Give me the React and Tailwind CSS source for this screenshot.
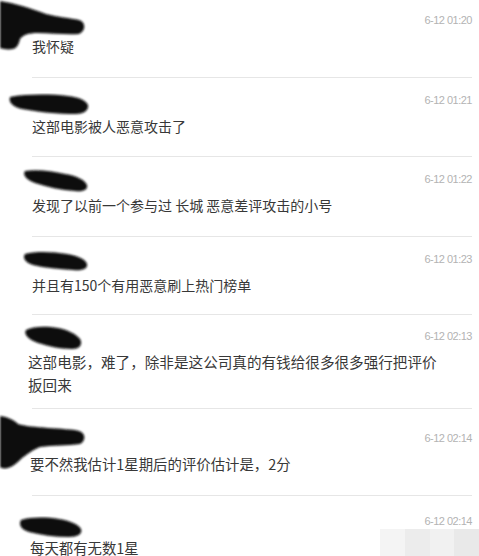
import React from "react";

const font = { fontFamily: '"Noto Sans CJK SC", "Noto Sans", sans-serif' };

function Blob({ className, d, w, h }) {
  return (
    <svg className={className} width={w} height={h} viewBox={`0 0 ${w} ${h}`}>
      <defs>
        <filter id="bl" x="-20%" y="-20%" width="140%" height="140%">
          <feGaussianBlur stdDeviation="0.9" />
        </filter>
      </defs>
      <path d={d} fill="#0b0b0b" filter="url(#bl)" />
    </svg>
  );
}

function Item({ time, children, pt, textMt, divMt, textCls, divider = true }) {
  return (
    <div className={pt}>
      <div className="text-right text-[11px] leading-[14px] tracking-[-0.5px] text-[#b3b3b3] [font-family:'Liberation_Sans',Arial,sans-serif]">
        {time}
      </div>
      <div className={`${textMt} ${textCls}`}>{children}</div>
      {divider && <div className={`${divMt} border-t border-[#e6e6e6]`} />}
    </div>
  );
}

export default function App() {
  const base = "text-[14px] leading-[20px] text-[#383838]";
  return (
    <div
      className="relative w-[479px] h-[556px] overflow-hidden bg-white pl-[32px] pr-[7px]"
      style={font}
    >
      <Item time="6-12 01:20" pt="pt-[13px]" textMt="mt-[9px]" divMt="mt-[21px]" textCls={base}>
        我怀疑
      </Item>
      <Item time="6-12 01:21" pt="pt-[15px]" textMt="mt-[9px]" divMt="mt-[20px]" textCls={base}>
        这部电影被人恶意攻击了
      </Item>
      <Item time="6-12 01:22" pt="pt-[15px]" textMt="mt-[9px]" divMt="mt-[21px]" textCls={base}>
        发现了以前一个参与过 长城 恶意差评攻击的小号
      </Item>
      <Item time="6-12 01:23" pt="pt-[15px]" textMt="mt-[9px]" divMt="mt-[19px]" textCls={base}>
        并且有150个有用恶意刷上热门榜单
      </Item>
      <Item
        time="6-12 02:13"
        pt="pt-[14px]"
        textMt="mt-[7px]"
        divMt="mt-[12px]"
        textCls="-ml-[4px] text-[14.6px] leading-[23px] text-[#383838]"
      >
        这部电影，难了，除非是这公司真的有钱给很多很多强行把评价
        <br />
        扳回来
      </Item>
      <Item
        time="6-12 02:14"
        pt="pt-[22px]"
        textMt="mt-[9px]"
        divMt="mt-[21px]"
        textCls="-ml-[2px] text-[14.4px] leading-[20px] text-[#383838]"
      >
        要不然我估计1星期后的评价估计是，2分
      </Item>
      <Item
        time="6-12 02:14"
        pt="pt-[18px]"
        textMt="mt-[10px]"
        textCls="-ml-[2px] text-[14.4px] leading-[20px] text-[#383838]"
        divider={false}
      >
        每天都有无数1星
      </Item>

      {/* watermark blocks */}
      <div className="absolute left-[380px] top-[529px] w-[99px] h-[27px] grid grid-cols-4">
        <div className="bg-[#f4f4f4]" />
        <div className="bg-[#ececec]" />
        <div className="bg-[#f1f1f1]" />
        <div className="bg-[#e9e9e9]" />
      </div>

      {/* redaction scribbles */}
      <Blob
        className="absolute left-0 top-0"
        w={88}
        h={52}
        d="M0,1 C14,3 30,8 46,14 C58,17 70,18 79,20 C86,22 86,31 79,34 C66,35 52,33 38,33 C28,33 23,35 20,39 C19,44 17,48 13,49 C8,50 3,49 0,48 Z"
      />
      <Blob
        className="absolute left-[6px] top-[93px]"
        w={86}
        h={24}
        d="M4,4 C20,1 44,1 62,3 C72,4 80,7 82,12 C83,17 78,21 70,21 C52,21 32,19 16,16 C8,14 2,10 4,4 Z"
      />
      <Blob
        className="absolute left-[21px] top-[167px]"
        w={70}
        h={28}
        d="M4,4 C16,2 30,4 44,7 C56,9 64,13 66,18 C67,23 62,25 54,24 C40,23 26,20 14,16 C6,13 1,8 4,4 Z"
      />
      <Blob
        className="absolute left-[21px] top-[250px]"
        w={70}
        h={24}
        d="M4,4 C16,1 32,2 46,4 C58,6 65,10 66,14 C67,19 61,21 52,20 C38,19 24,18 12,15 C5,13 1,8 4,4 Z"
      />
      <Blob
        className="absolute left-[22px] top-[325px]"
        w={64}
        h={28}
        d="M4,5 C12,1 24,1 36,3 C46,5 54,9 58,14 C61,19 58,24 50,24 C38,24 26,21 16,18 C8,15 1,10 4,5 Z"
      />
      <Blob
        className="absolute left-0 top-[414px]"
        w={88}
        h={56}
        d="M0,2 C8,3 14,6 18,10 C24,12 36,13 48,14 C60,15 72,15 79,17 C86,19 86,27 80,30 C68,32 52,31 40,33 C32,36 28,40 22,44 C18,48 14,52 8,54 C4,55 1,54 0,53 Z"
      />
      <Blob
        className="absolute left-[17px] top-[516px]"
        w={70}
        h={24}
        d="M4,4 C14,1 28,1 42,3 C54,5 62,9 64,13 C66,18 60,21 52,21 C38,21 24,19 12,16 C5,14 1,9 4,4 Z"
      />
    </div>
  );
}
